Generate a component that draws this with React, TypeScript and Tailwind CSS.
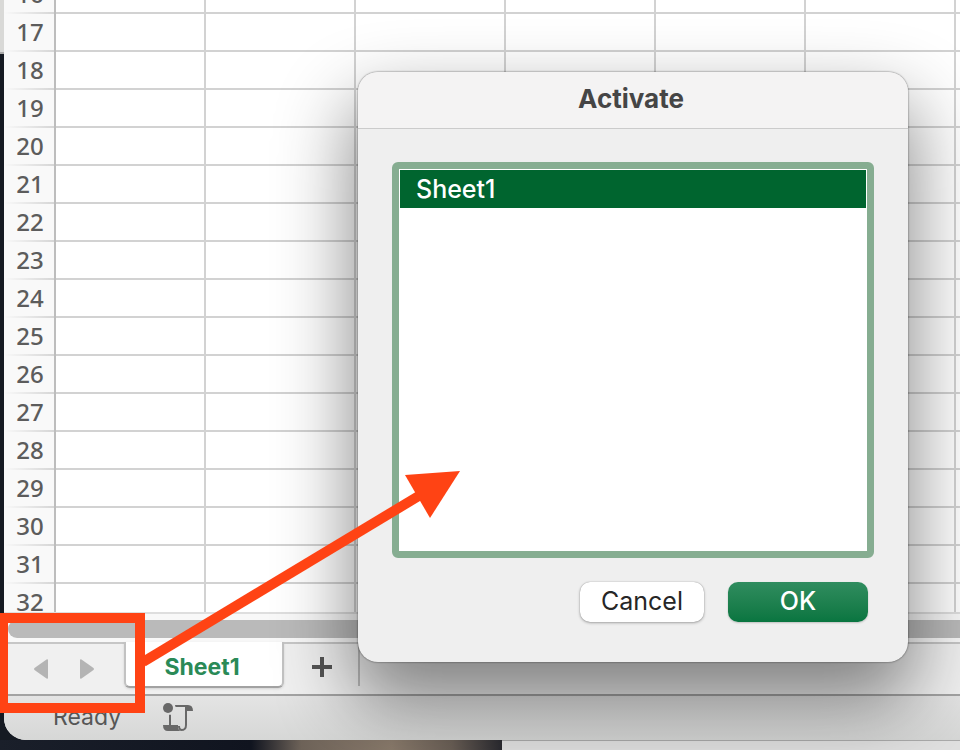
import React from "react";

const rows = Array.from({ length: 17 }, (_, i) => i + 16);
const columns = ["A", "B", "C", "D", "E", "F", "G", "H", "I", "J", "K", "L"];

function Grid() {
  return (
    <div className="min-h-0 flex-1 overflow-hidden border-b-2 border-[#dedede] bg-white">
      <table className="-mt-6 w-[1852px] table-fixed border-separate border-spacing-0">
        <colgroup>
          <col className="w-[52px]" />
          {columns.map((c) => (
            <col key={c} className="w-[150px]" />
          ))}
        </colgroup>
        <tbody>
          {rows.map((n) => (
            <tr key={n} className="h-[38px]">
              <th
                scope="row"
                className="h-[38px] border-r-2 border-[#bdbdbd] bg-[#f9f9f9] bg-[linear-gradient(to_right,#f9f9f9,#d6d6d6)] bg-[length:100%_2px] bg-bottom bg-no-repeat p-0 pb-0.5 pl-0.5 text-center font-['Noto_Sans',sans-serif] text-[24px] leading-[34px] font-medium text-[#5c5c5c]"
              >
                {n}
              </th>
              {columns.map((c) => (
                <td key={c} className="border-r-2 border-b-2 border-[#d2d2d2] p-0" />
              ))}
            </tr>
          ))}
        </tbody>
      </table>
    </div>
  );
}

function SheetTabs() {
  return (
    <div className="flex h-[52px] shrink-0 bg-[#f0f0f0]">
      <div className="flex w-[120px] items-center border-t-2 border-[#c6c6c6] pl-[30px]">
        <button type="button" aria-label="Previous sheet" className="mr-8">
          <svg width="14" height="20" viewBox="0 0 14 20" fill="#b4b4b4">
            <path d="M12.500.4Q14 0 14 1v18q0 1-1.500.6L.5 11Q-.4 10 .5 9z" />
          </svg>
        </button>
        <button type="button" aria-label="Next sheet">
          <svg width="14" height="20" viewBox="0 0 14 20" fill="#b4b4b4">
            <path d="M1.500.4Q0 0 0 1v18q0 1 1.500.6L13.500 11q.9-1 0-2z" />
          </svg>
        </button>
      </div>
      <button
        type="button"
        className="h-[46px] w-[160px] rounded-b-md border-x-2 border-b-2 border-[#c2c2c2] border-b-[#a2a2a2] bg-white pt-1.5 pr-1 font-[Inter,sans-serif] text-[23px] leading-[28px] font-bold text-[#2a8a57] shadow-sm"
      >
        Sheet1
      </button>
      <div className="flex w-[74px] items-center justify-center border-t-2 border-[#c6c6c6] pb-1 pl-0.5">
        <button type="button" aria-label="Add sheet">
          <svg width="20" height="20" viewBox="0 0 20 20" fill="#555">
            <path d="M8 0h4v8h8v4h-8v8H8v-8H0V8h8z" />
          </svg>
        </button>
      </div>
      <div className="flex-1 border-t-2 border-[#c6c6c6]">
        <div className="h-[42px] border-l-2 border-[#bcbcbc]" />
      </div>
    </div>
  );
}

function StatusBar() {
  return (
    <div className="flex h-[46px] shrink-0 items-center gap-[42px] border-t-2 border-[#a3a3a3] bg-linear-to-b from-[#e4e4e4] to-[#d6d7d6] pb-0.5 pl-[49px]">
      <span className="font-[Inter,sans-serif] text-[23px] leading-[28px] text-[#565656]">Ready</span>
      <svg width="32" height="30" viewBox="0 0 32 30" fill="#686868">
        <circle cx="5" cy="6" r="5" />
        <path d="M6 13q1-1 2 0v10h7v2q0 3 3 4H5q-5 0-5-6h6z" />
        <path d="M12 3h13q5 0 5 6h-6V23q0 6-6 6-3-1-3-5h2q0 3 2 3 3 0 3-4V5H13q-1 0-1-2z" />
      </svg>
    </div>
  );
}

function ActivateDialog() {
  return (
    <div
      role="dialog"
      aria-labelledby="dialog-title"
      className="absolute top-[72px] right-[52px] flex w-[550px] flex-col overflow-hidden rounded-[20px] bg-[#efefef] font-[Inter,sans-serif] text-[25px] leading-[32px] shadow-[0_0_2px_rgba(0,0,0,0.65),0_36px_76px_6px_rgba(0,0,0,0.46)]"
    >
      <h1
        id="dialog-title"
        className="h-[57px] border-b border-[#cbcbcb] bg-[#f4f3f3] pt-[11px] pr-1 text-center text-[26px] font-bold text-[#454545]"
      >
        Activate
      </h1>
      <div className="px-[34px] pt-[33px] pb-10">
        <ul
          role="listbox"
          aria-label="Sheets"
          className="h-[396px] rounded-md border-[7px] border-[#86ad91] bg-white p-px"
        >
          <li
            role="option"
            aria-selected="true"
            className="h-[38px] bg-[#00652f] pl-4 leading-[38px] font-medium text-white"
          >
            Sheet1
          </li>
        </ul>
        <div className="mt-6 flex justify-end gap-6 pr-1.5">
          <button
            type="button"
            className="h-10 w-[124px] rounded-[10px] bg-white pb-0.5 text-[#262626] shadow-[0_0_1px_rgba(0,0,0,0.4),0_1px_3px_rgba(0,0,0,0.3)]"
          >
            Cancel
          </button>
          <button
            type="button"
            className="h-10 w-[140px] rounded-[10px] bg-linear-to-b from-[#2f8d5f] to-[#087540] pb-0.5 font-medium text-white shadow-[0_1px_2px_rgba(0,0,0,0.2)]"
          >
            OK
          </button>
        </div>
      </div>
    </div>
  );
}

export default function App() {
  return (
    <div className="relative flex h-screen flex-col overflow-hidden bg-[#151a22] pl-1">
      <div className="absolute top-0 left-0 h-[54px] w-1 border-b-2 border-[#aaa] bg-[#d9d9d7]" />
      <main className="z-10 flex min-h-0 flex-1 flex-col overflow-hidden rounded-bl-[22px] bg-[#f8f8f8]">
        <Grid />
        <div className="h-7 shrink-0 bg-[#f8f8f8] pt-1.5 pl-1">
          <div className="h-[18px] rounded-l-full bg-[#bababa]" />
        </div>
        <SheetTabs />
        <StatusBar />
      </main>
      <div className="-ml-1 flex h-2.5 shrink-0">
        <div className="w-[502px] bg-[linear-gradient(to_right,#1a1f2a,#10141f_50%,#6e6359_60%,#8a7b6c_78%,#6a5f56_90%,#2a2a30)]" />
        <div className="flex-1 border-t border-[#aaa] bg-[#e0e0e0]" />
      </div>
      <div className="absolute inset-0 z-20">
        <ActivateDialog />
        <svg className="pointer-events-none absolute bottom-0 left-0" width="480" height="300" viewBox="0 450 480 300">
          <rect x="3" y="618" width="137" height="90" fill="none" stroke="#ff4314" strokeWidth="10" />
          <path d="M143 662 422 494" stroke="#ff4314" strokeWidth="10" />
          <path d="M460 471 405 475 430 518z" fill="#ff4314" />
        </svg>
      </div>
    </div>
  );
}
